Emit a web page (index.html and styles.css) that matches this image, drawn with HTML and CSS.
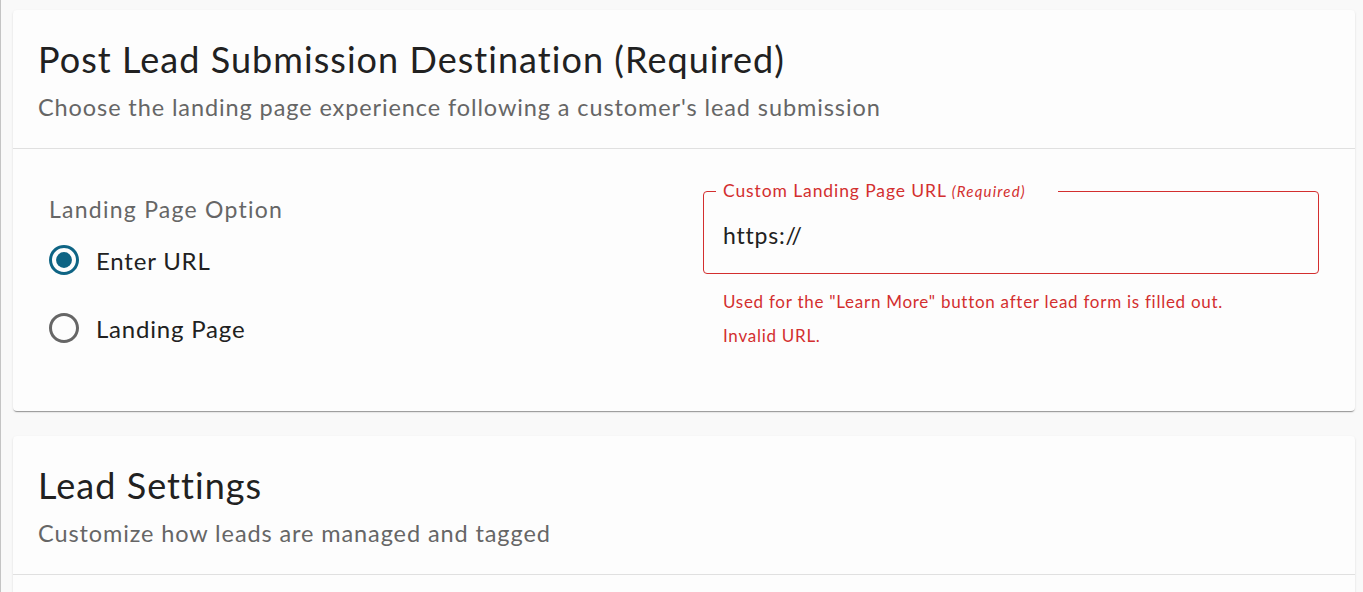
FILE: index.html
```html
<!DOCTYPE html>
<html lang="en">
<head>
<meta charset="utf-8">
<title>Post Lead Submission Destination</title>
<link rel="stylesheet" href="styles.css">
</head>
<body>
<div class="frame">
  <section class="card">
    <header class="card-header">
      <h2 class="card-title">Post Lead Submission Destination (Required)</h2>
      <p class="card-subtitle">Choose the landing page experience following a customer's lead submission</p>
    </header>
    <div class="card-body">
      <div class="col-left">
        <div class="group-label">Landing Page Option</div>
        <div class="radio-list">
          <label class="radio-row">
            <svg class="radio checked" viewBox="0 0 24 24" width="36" height="36"><path d="M12 2C6.48 2 2 6.48 2 12s4.48 10 10 10 10-4.48 10-10S17.52 2 12 2zm0 18c-4.42 0-8-3.58-8-8s3.58-8 8-8 8 3.58 8 8-3.58 8-8 8z"/><circle cx="12" cy="12" r="5.3"/></svg>
            <span class="radio-text">Enter URL</span>
          </label>
          <label class="radio-row">
            <svg class="radio" viewBox="0 0 24 24" width="36" height="36"><path d="M12 2C6.48 2 2 6.48 2 12s4.48 10 10 10 10-4.48 10-10S17.52 2 12 2zm0 18c-4.42 0-8-3.58-8-8s3.58-8 8-8 8 3.58 8 8-3.58 8-8 8z"/></svg>
            <span class="radio-text">Landing Page</span>
          </label>
        </div>
      </div>
      <div class="col-right">
        <div class="field">
          <span class="field-label">Custom Landing Page URL <em>(Required)</em></span>
          <span class="field-value">https://</span>
        </div>
        <p class="helper first">Used for the "Learn More" button after lead form is filled out.</p>
        <p class="helper">Invalid URL.</p>
      </div>
    </div>
  </section>
  <section class="card">
    <header class="card-header">
      <h2 class="card-title">Lead Settings</h2>
      <p class="card-subtitle">Customize how leads are managed and tagged</p>
    </header>
    <div class="card-body short"></div>
  </section>
</div>
</body>
</html>
```
FILE: styles.css
```css
html, body {
  margin: 0;
  padding: 0;
  background: #f9f9f9;
}
body {
  font-family: "Lato", "Liberation Sans", sans-serif;
}
.frame {
  height: 590px;
  overflow: hidden;
  border-left: 1px solid #c4c4c4;
  border-bottom: 2px solid #c2c2c2;
  padding: 10px 8px 0 12px;
  display: flex;
  flex-direction: column;
  gap: 25px;
}
.card {
  background: #fdfdfd;
  border-radius: 4px;
  box-shadow: 0 2px 1px -1px rgba(0,0,0,0.28), 0 1px 1px 0 rgba(0,0,0,0.12), 0 1px 3px 0 rgba(0,0,0,0.08);
  flex-shrink: 0;
}
.card-header {
  height: 139px;
  box-sizing: border-box;
  padding: 27px 25px 0;
  border-bottom: 1px solid #e0e0e0;
}
.card-title {
  margin: 0;
  font-weight: 400;
  font-size: 36px;
  line-height: 44px;
  color: #212121;
  letter-spacing: 1.05px;
}
.card-subtitle {
  margin: 12px 0 0;
  font-size: 23.5px;
  line-height: 28px;
  color: #666;
  letter-spacing: 0.9px;
}
.card-body {
  display: grid;
  grid-template-columns: 1fr 1fr;
  column-gap: 38px;
  padding: 42px 36px 0;
  height: 262px;
  box-sizing: border-box;
}
.card-body.short {
  height: 60px;
}
.group-label {
  margin-top: 4px;
  font-size: 23px;
  line-height: 28px;
  color: #666;
  letter-spacing: 1.25px;
}
.radio-list {
  display: flex;
  flex-direction: column;
  gap: 22px;
  margin-top: 14px;
  margin-left: -3px;
}
.radio-row {
  display: flex;
  align-items: center;
  gap: 14px;
  height: 46px;
}
.radio {
  fill: #666;
  flex-shrink: 0;
}
.radio.checked {
  fill: #0e6484;
}
.radio-text {
  font-size: 24px;
  color: #212121;
  letter-spacing: 0.8px;
}
.col-right {
  display: flex;
  flex-direction: column;
}
.field {
  position: relative;
  height: 83px;
  box-sizing: border-box;
  border: 1px solid #d32f2f;
  border-radius: 4px;
  display: flex;
  align-items: center;
  padding: 4px 19px 0;
}
.field-label {
  position: absolute;
  left: 12px;
  top: -12px;
  padding: 0 32px 0 7px;
  background: #fdfdfd;
  font-size: 17.5px;
  line-height: 22px;
  color: #d32f2f;
  letter-spacing: 0.9px;
}
.field-label em {
  font-size: 15px;
  letter-spacing: 1.2px;
}
.field-value {
  font-size: 23px;
  color: #212121;
  letter-spacing: 0.8px;
}
.helper {
  margin: 0 0 0 20px;
  font-size: 17px;
  line-height: 34px;
  color: #d32f2f;
  letter-spacing: 0.73px;
}
.helper.first {
  margin-top: 11px;
}
```
